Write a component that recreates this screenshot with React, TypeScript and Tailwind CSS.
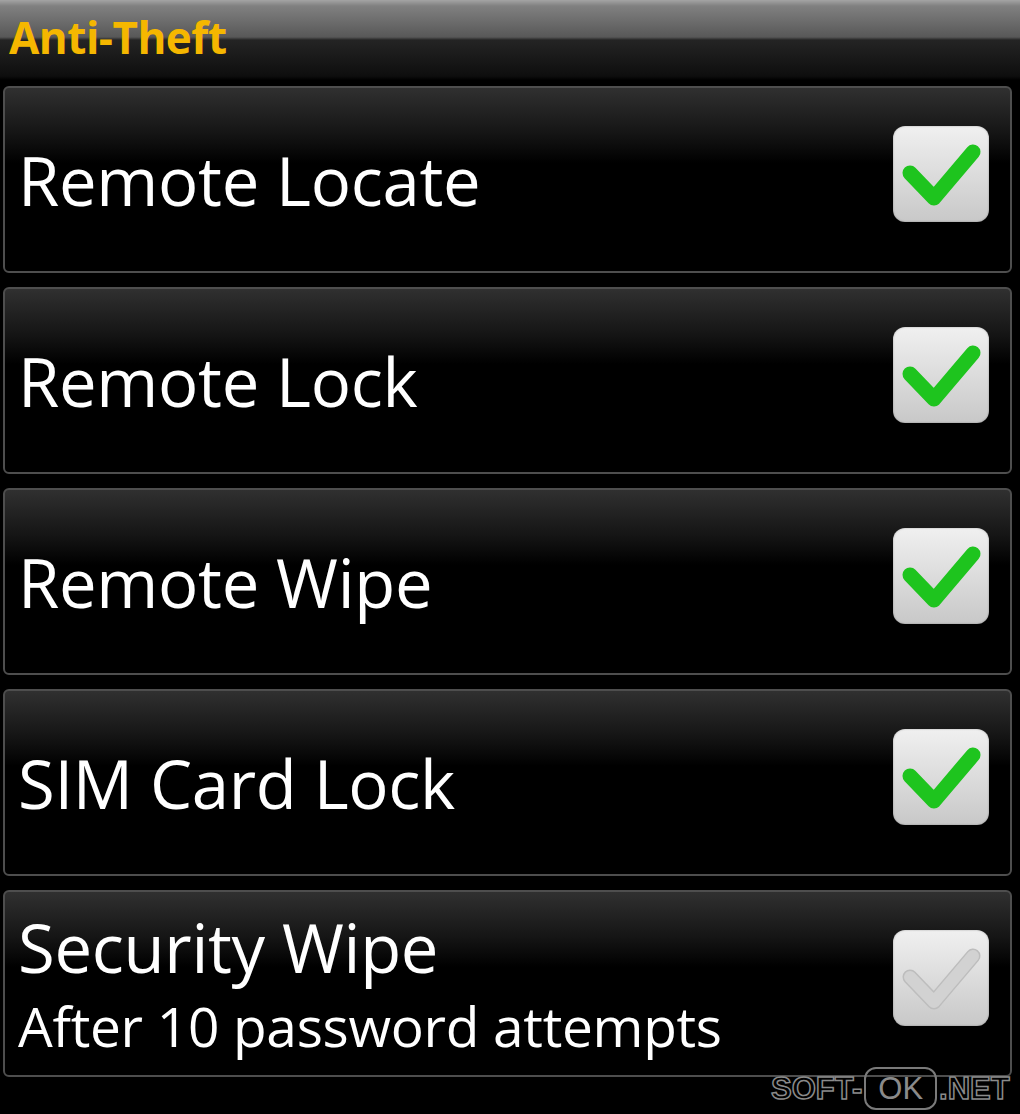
import React from "react";

const items = [
  { title: "Remote Locate", on: true },
  { title: "Remote Lock", on: true },
  { title: "Remote Wipe", on: true },
  { title: "SIM Card Lock", on: true },
  { title: "Security Wipe", sub: "After 10 password attempts", on: false },
];

function CheckBox({ on }: { on: boolean }) {
  return (
    <div className="w-[96px] h-[96px] rounded-[12px] bg-[linear-gradient(to_bottom,#f0f0f0,#dcdcdc_50%,#c8c8c8)] shadow-[inset_0_0_2px_rgba(0,0,0,0.35)] flex items-center justify-center shrink-0">
      <svg width="96" height="96" viewBox="0 0 96 96">
        {on ? (
          <path d="M17 47 L41 72 L80 26" fill="none" stroke="#1ec41e" strokeWidth="15" strokeLinecap="round" strokeLinejoin="round" />
        ) : (
          <>
            <path d="M17 47 L41 72 L80 26" fill="none" stroke="#bdbdbd" strokeWidth="15" strokeLinecap="round" strokeLinejoin="round" />
            <path d="M17 47 L41 72 L80 26" fill="none" stroke="#d2d2d2" strokeWidth="12" strokeLinecap="round" strokeLinejoin="round" />
          </>
        )}
      </svg>
    </div>
  );
}

export default function App() {
  return (
    <div className="w-[1020px] h-[1114px] bg-black overflow-hidden relative font-['Open_Sans','Noto_Sans',sans-serif]">
      <div className="h-[82px] bg-[linear-gradient(to_bottom,#a4a4a4_0px,#808080_6px,#585858_37px,#242424_40px,#0e0e0e_76px,#000_80px)] pl-[9px] pt-[11px]">
        <div className="text-[#f5b700] font-bold text-[44px] leading-[52px] tracking-[-0.5px]">Anti-Theft</div>
      </div>
      <div className="flex flex-col gap-[14px] pl-[3px] pr-[8px] pt-[4px]">
        {items.map((it) => (
          <div
            key={it.title}
            className="h-[187px] rounded-[6px] border-2 border-[#4e4e4e] bg-[linear-gradient(to_bottom,#303030_0px,#151515_45px,#000_75px,#000_100%)] flex items-center pl-[13px] pr-[21px]"
          >
            <div className="flex-1 flex flex-col text-white">
              <div className={`text-[67px] tracking-[-0.3px] ${it.sub ? "leading-[72px] -mt-[8px]" : "leading-[80px]"}`}>{it.title}</div>
              {it.sub && (
                <div className="text-[55px] leading-[62px] mt-[12px] -mb-[8px] tracking-[-0.3px]">{it.sub}</div>
              )}
            </div>
            <div className="mb-[12px]">
              <CheckBox on={it.on} />
            </div>
          </div>
        ))}
      </div>
      <div className="absolute left-[771px] top-[1067px] flex items-center text-[31px] leading-[39px] font-['Liberation_Sans',sans-serif] font-bold">
        <span className="text-transparent [-webkit-text-stroke:1.5px_#8a8a8a]">SOFT-</span>
        <span className="border-2 border-[#7a7a7a] rounded-[12px] px-[12px] text-[#8a8a8a] font-normal mx-[2px]">OK</span>
        <span className="text-transparent [-webkit-text-stroke:1.5px_#8a8a8a]">.NET</span>
      </div>
    </div>
  );
}
